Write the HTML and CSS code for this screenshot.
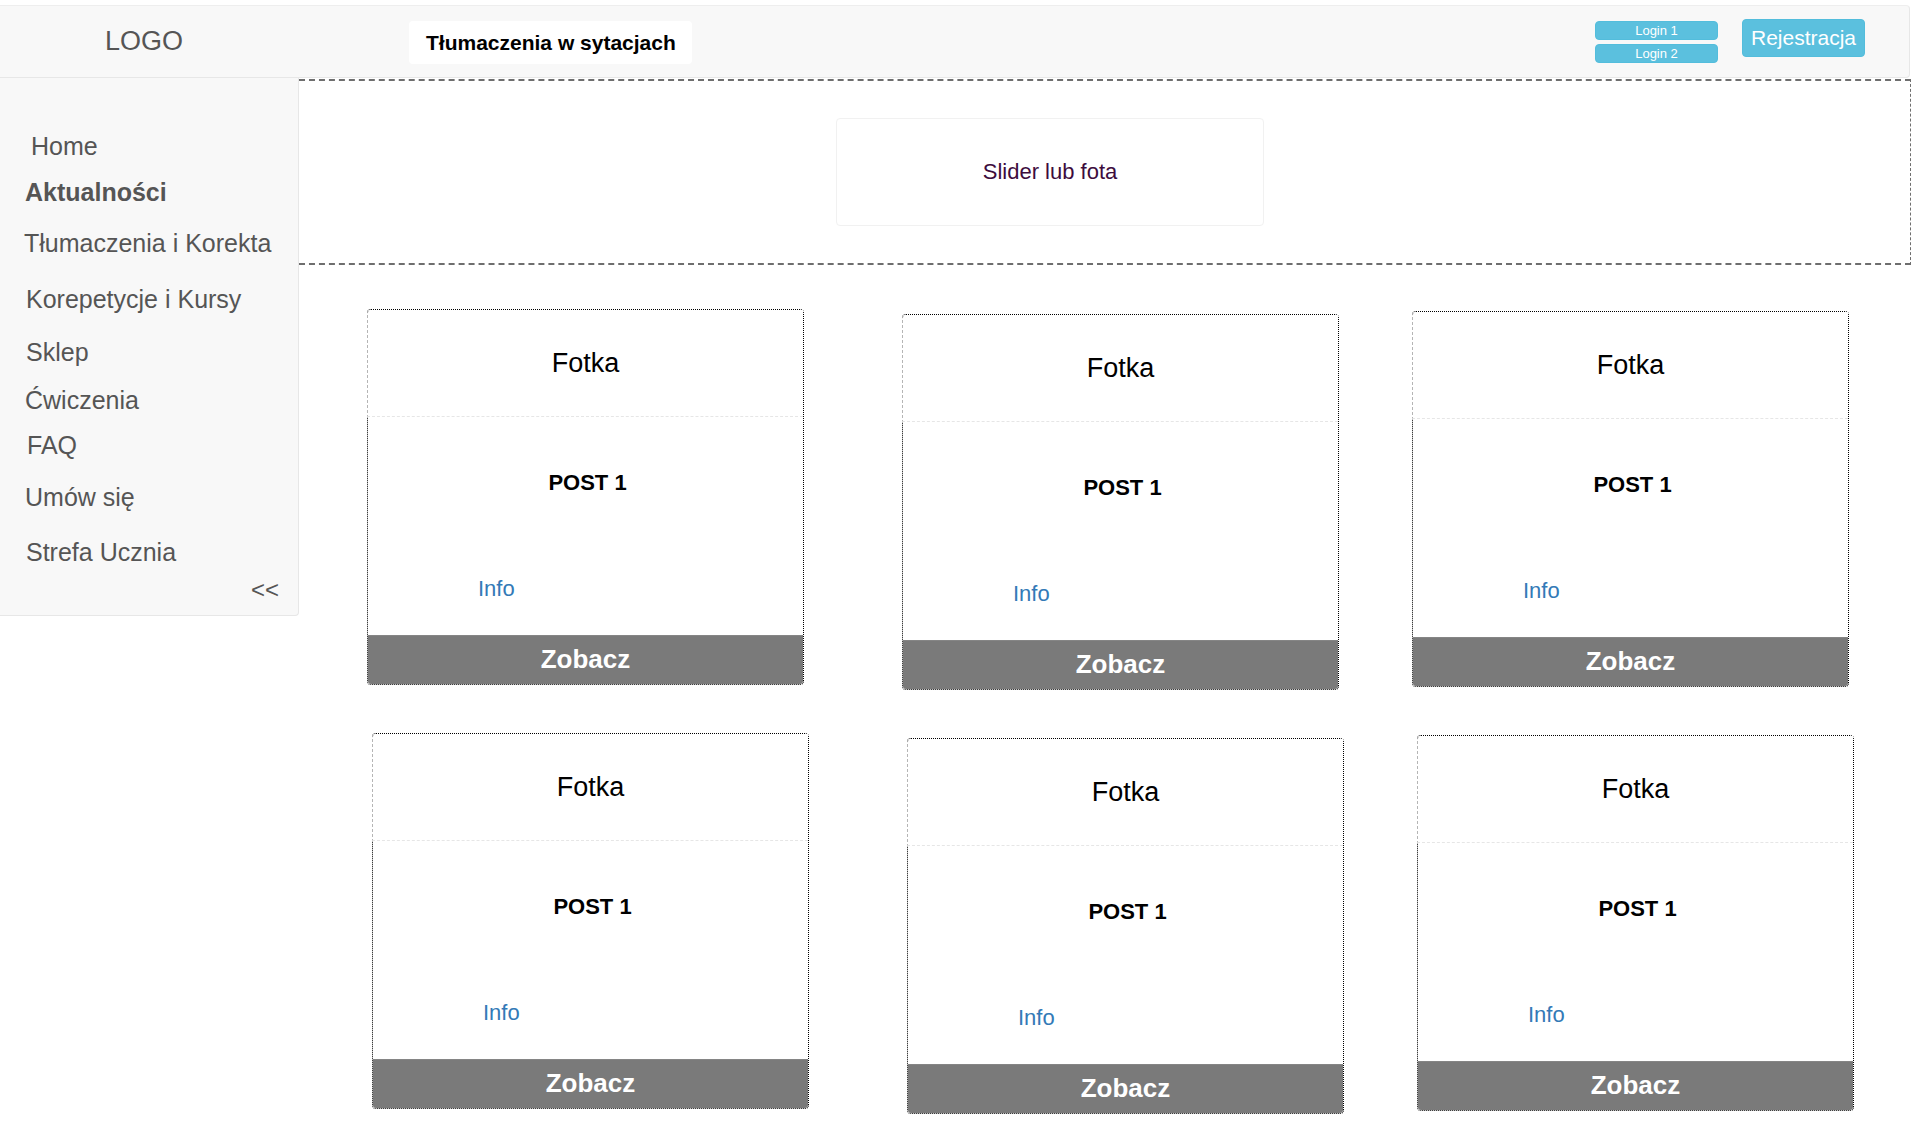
FILE: index.html
```html
<!DOCTYPE html>
<html lang="pl">
<head>
<meta charset="utf-8">
<title>Tłumaczenia w sytacjach</title>
<link rel="stylesheet" href="styles.css">
</head>
<body>
<header class="topbar">
  <div class="brand">LOGO</div>
  <div class="title-box">Tłumaczenia w sytacjach</div>
  <div class="spacer"></div>
  <div class="logins">
    <button class="btn-login">Login 1</button>
    <button class="btn-login">Login 2</button>
  </div>
  <button class="btn-register">Rejestracja</button>
</header>
<div class="layout">
  <aside class="sidebar">
    <ul class="nav">
      <li class="nav-item">Home</li>
      <li class="nav-item nav-active">Aktualności</li>
      <li class="nav-item">Tłumaczenia i Korekta</li>
      <li class="nav-item">Korepetycje i Kursy</li>
      <li class="nav-item">Sklep</li>
      <li class="nav-item">Ćwiczenia</li>
      <li class="nav-item">FAQ</li>
      <li class="nav-item">Umów się</li>
      <li class="nav-item">Strefa Ucznia</li>
    </ul>
    <div class="collapse">&lt;&lt;</div>
  </aside>
  <main class="main">
    <section class="slider">
      <div class="slider-box">Slider lub fota</div>
    </section>
    <section class="cards">
      <article class="card"><div class="card-photo">Fotka</div><div class="card-body"><div class="card-title">POST 1</div><a class="card-info">Info</a></div><div class="card-btn">Zobacz</div></article>
      <article class="card"><div class="card-photo">Fotka</div><div class="card-body"><div class="card-title">POST 1</div><a class="card-info">Info</a></div><div class="card-btn">Zobacz</div></article>
      <article class="card"><div class="card-photo">Fotka</div><div class="card-body"><div class="card-title">POST 1</div><a class="card-info">Info</a></div><div class="card-btn">Zobacz</div></article>
      <article class="card"><div class="card-photo">Fotka</div><div class="card-body"><div class="card-title">POST 1</div><a class="card-info">Info</a></div><div class="card-btn">Zobacz</div></article>
      <article class="card"><div class="card-photo">Fotka</div><div class="card-body"><div class="card-title">POST 1</div><a class="card-info">Info</a></div><div class="card-btn">Zobacz</div></article>
      <article class="card"><div class="card-photo">Fotka</div><div class="card-body"><div class="card-title">POST 1</div><a class="card-info">Info</a></div><div class="card-btn">Zobacz</div></article>
    </section>
  </main>
</div>
</body>
</html>
```
FILE: styles.css
```css
* { box-sizing: border-box; }
html, body { margin: 0; padding: 0; background: #fff; }
body {
  font-family: "Liberation Sans", Arial, sans-serif;
  color: #000;
  overflow: hidden;
}

/* ---------- top bar ---------- */
.topbar {
  margin-top: 5px;
  width: 1910px;
  height: 73px;
  background: #f8f8f8;
  border: 1px solid #e7e7e7;
  border-left: none;
  border-top-color: #eeeeee;
  border-radius: 0 4px 4px 0;
  display: flex;
  align-items: flex-start;
}
.brand {
  width: 409px;
  padding-left: 105px;
  margin-top: 20px;
  font-size: 27px;
  line-height: 30px;
  color: #555;
}
.title-box {
  margin-top: 15px;
  height: 43px;
  width: 283px;
  padding: 0 17px;
  background: #fff;
  border-radius: 4px;
  display: flex;
  align-items: center;
  font-weight: bold;
  font-size: 21px;
  color: #000;
  white-space: nowrap;
}
.spacer { flex: 1; }
.logins {
  margin-top: 15px;
  display: flex;
  flex-direction: column;
  gap: 4px;
  margin-right: 24px;
}
.btn-login {
  width: 123px;
  height: 19px;
  padding: 0;
  border: 1px solid #53bddc;
  border-radius: 4px;
  background: #5bc0de;
  color: #fff;
  font-family: "Liberation Sans", Arial, sans-serif;
  font-size: 13px;
  line-height: 17px;
}
.btn-register {
  margin-top: 13px;
  margin-right: 44px;
  width: 123px;
  height: 38px;
  padding: 0;
  border: 1px solid #53bddc;
  border-radius: 4px;
  background: #5bc0de;
  color: #fff;
  font-family: "Liberation Sans", Arial, sans-serif;
  font-size: 21px;
  line-height: 34px;
}

/* ---------- layout ---------- */
.layout {
  display: flex;
  align-items: flex-start;
}

/* ---------- sidebar ---------- */
.sidebar {
  flex: 0 0 299px;
  width: 299px;
  background: #f8f8f8;
  border-right: 1px solid #e7e7e7;
  border-bottom: 1px solid #e7e7e7;
  border-bottom-right-radius: 4px;
  padding-top: 53px;
  padding-bottom: 10px;
}
.nav {
  list-style: none;
  margin: 0;
  padding: 0;
}
.nav-item {
  font-size: 25px;
  line-height: 30px;
  color: #555;
  white-space: nowrap;
}
.nav-active { font-weight: bold; }
.nav-item:nth-child(1) { padding-left: 31px; }
.nav-item:nth-child(2) { padding-left: 25px; margin-top: 16px; }
.nav-item:nth-child(3) { padding-left: 24px; margin-top: 21px; }
.nav-item:nth-child(4) { padding-left: 26px; margin-top: 26px; }
.nav-item:nth-child(5) { padding-left: 26px; margin-top: 23px; }
.nav-item:nth-child(6) { padding-left: 25px; margin-top: 18px; }
.nav-item:nth-child(7) { padding-left: 27px; margin-top: 15px; }
.nav-item:nth-child(8) { padding-left: 25px; margin-top: 22px; }
.nav-item:nth-child(9) { padding-left: 26px; margin-top: 25px; }
.collapse {
  margin-top: 8px;
  text-align: right;
  padding-right: 19px;
  font-size: 24px;
  line-height: 30px;
  color: #555;
}

/* ---------- main ---------- */
.main {
  flex: 0 0 1612px;
  width: 1612px;
}
.slider {
  margin-top: 1px;
  height: 186px;
  border: 2px dashed #6e6e6e;
  border-right-width: 1px;
  border-left: none;
  padding-top: 37px;
  padding-left: 537px;
}
.slider-box {
  width: 428px;
  height: 108px;
  background: #fff;
  border: 1px solid #f1f1f1;
  border-radius: 4px;
  display: flex;
  align-items: center;
  justify-content: center;
  font-size: 22px;
  color: #3d0c3d;
}

/* ---------- cards ---------- */
.cards {
  display: grid;
  grid-template-columns: 535px 510px 442px;
  row-gap: 43px;
  align-items: start;
  padding-left: 68px;
  padding-top: 44px;
}
.card {
  width: 437px;
  height: 376px;
  border: 1px dotted #000;
  border-radius: 4px;
  background: #fff;
  display: flex;
  flex-direction: column;
}
.card:nth-child(2) { margin-top: 5px; }
.card:nth-child(3) { margin-top: 2px; }
.card:nth-child(4) { margin-left: 5px; }
.card:nth-child(5) { margin-left: 5px; margin-top: 5px; }
.card:nth-child(6) { margin-left: 5px; margin-top: 2px; }

.card-photo {
  height: 107px;
  margin-left: -1px;
  border-left: 1px dashed #b5b5b5;
  border-bottom: 1px dashed #e6e6e6;
  border-top-left-radius: 4px;
  background: #fff;
  padding-top: 38px;
  text-align: center;
  font-size: 27px;
  line-height: 31px;
  color: #000;
}
.card-body {
  flex: 1;
  display: flex;
  flex-direction: column;
  padding-top: 53px;
}
.card-title {
  text-align: center;
  padding-left: 4px;
  font-weight: bold;
  font-size: 22px;
  line-height: 25px;
  color: #000;
}
.card-info {
  margin-top: 81px;
  padding-left: 110px;
  font-size: 22px;
  line-height: 25px;
  color: #337ab7;
}
.card-btn {
  height: 49px;
  background: #7a7a7a;
  border-top: 1px solid #858585;
  border-radius: 0 0 3px 3px;
  text-align: center;
  font-weight: bold;
  font-size: 26px;
  line-height: 47px;
  color: #fff;
}
```
